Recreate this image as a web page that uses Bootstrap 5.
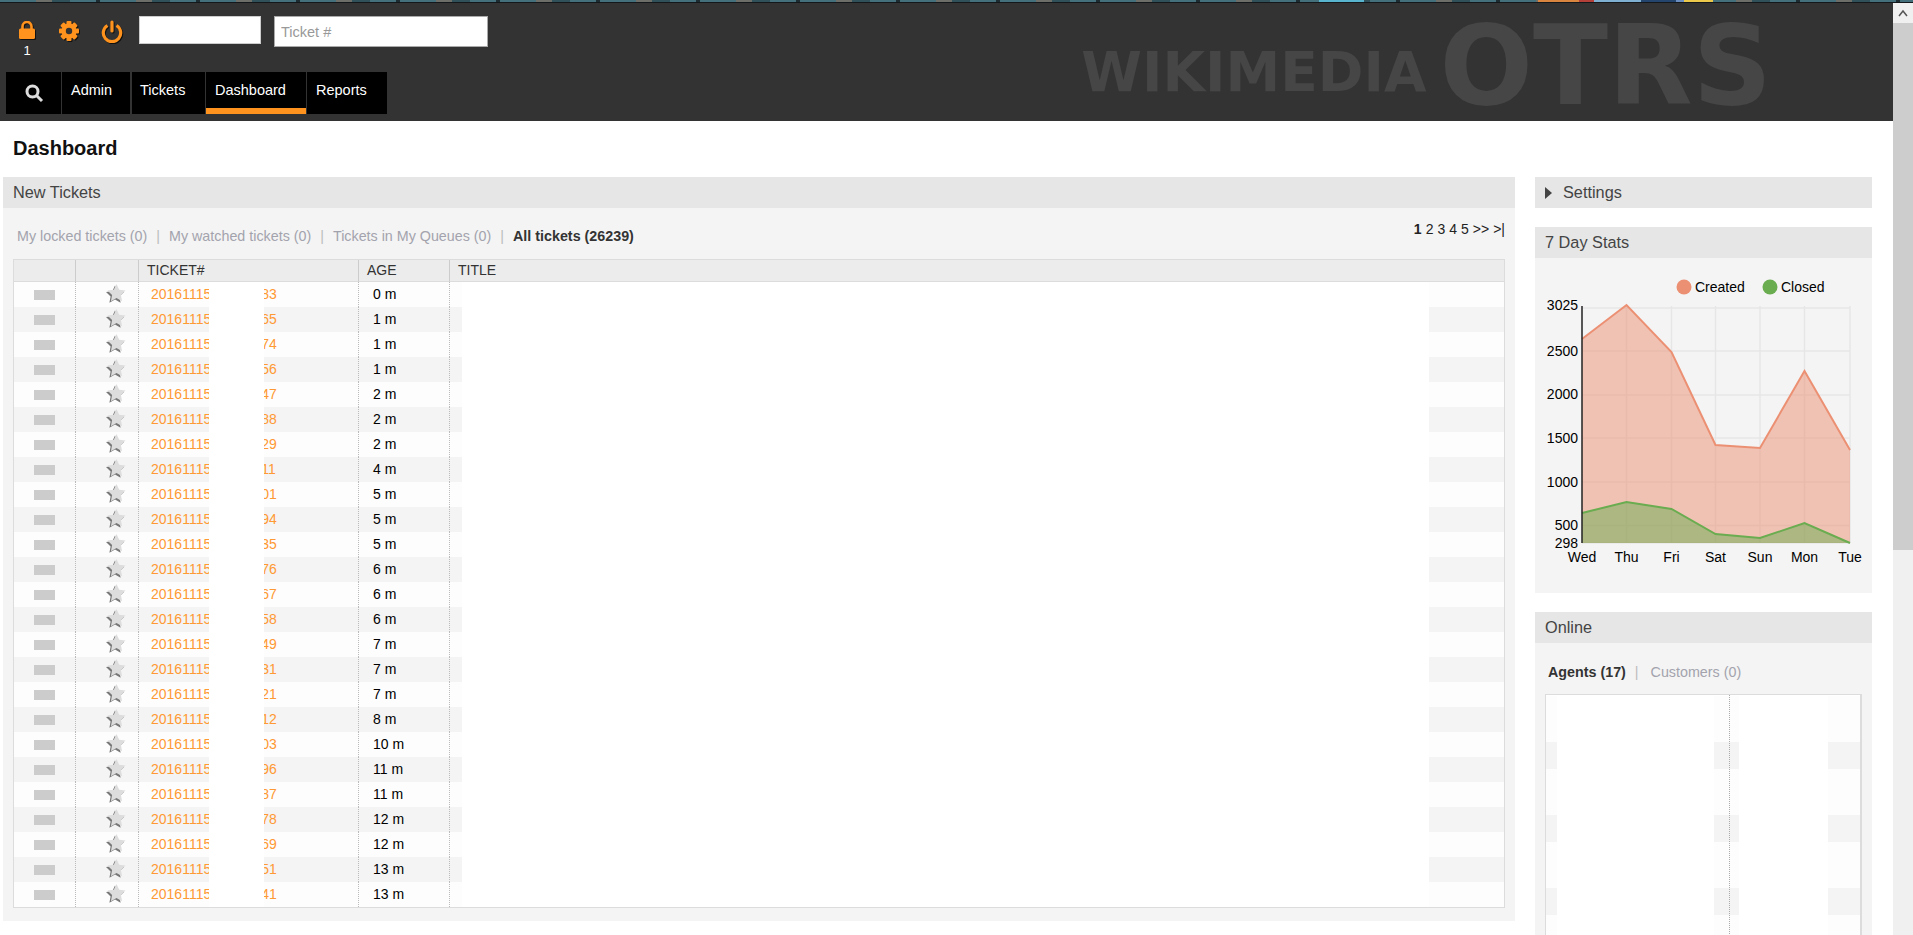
<!DOCTYPE html>
<html lang="en">
<head>
  <meta charset="UTF-8" />
  <meta name="viewport" content="width=device-width, initial-scale=1" />
  <title>Dashboard - OTRS</title>
  <link href="https://cdn.jsdelivr.net/npm/bootstrap@5.3.0/dist/css/bootstrap.min.css" rel="stylesheet" />
  <style>
    html, body { height: 100%; overflow: hidden; }
    body { font-family: "Liberation Sans", Arial, sans-serif; font-size: 14px; color: #000; background: #fff; }
    .top-strip {
      height: 3px;
      border-bottom: 1px solid #15181a;
      background:
        linear-gradient(90deg, transparent 1319px, #58b4cf 1319px 1364px, transparent 1364px 1538px, #d9853f 1538px 1579px, #b5403a 1579px 1594px, #7fb0d2 1594px 1641px, #24456e 1641px 1676px, #6b8fc0 1676px 1684px, #ecc94b 1684px 1713px, transparent 1713px),
        repeating-linear-gradient(90deg, #44707c 0 36px, #6e6e68 36px 52px, #30505a 52px 70px, #44707c 70px 96px, #1d2c31 96px 100px);
    }
    .screen { height: 932px; }
    .page { width: 1893px; overflow: hidden; }
    .fake-scroll { width: 20px; background: #f0f0f0; }
    .fake-scroll-btn { height: 20px; }
    .fake-scroll-thumb { height: 527px; background: #cdcdcd; }

    .head-bar { height: 118px; background: #333; }
    .tool-row { height: 69px; padding-top: 13px; padding-left: 17px; }
    .tool-lock { width: 20px; margin-top: 5px; }
    .tool-icon { display: block; margin: 0 auto; filter: drop-shadow(1px 1px 0 #111); }
    .tool-count { color: #fff; font-size: 13px; line-height: 14px; margin-top: 5px; }
    .tool-gear { margin-left: 21px; margin-top: 4px; filter: drop-shadow(1px 1px 0 #111); }
    .tool-power { margin-left: 21px; margin-right: 16px; margin-top: 3px; filter: drop-shadow(1px 1px 0 #111); }
    .search-box { width: 122px; height: 28px; border: 1px solid #ccc; background: #fff; }
    .ticket-box { width: 214px; height: 31px; margin-left: 13px; border: 1px solid #aaa; background: #fff; padding: 0 6px; font-size: 14.5px; color: #333; }
    .ticket-box::placeholder { color: #999; }
    .main-nav { margin-left: 6px; height: 42px; }
    .main-nav a { display: block; height: 42px; background: #000; color: #fff; text-decoration: none; line-height: 36px; font-size: 14.500px; padding: 0 9px; margin-right: 1px; }
    .main-nav a.on { box-shadow: inset 0 -6px 0 #ff931e; }
    .nav-search { width: 55px; display: flex !important; align-items: center; justify-content: center; }
    .nav-admin { width: 68px; }
    .main-nav a.nav-tickets { width: 73px; margin-left: 1px; padding-left: 8px; }
    .nav-dash { width: 100px; }
    .nav-reports { width: 80px; }
    .logo-text { color: #464646; font-family: "DejaVu Sans", sans-serif; font-weight: 700; margin-right: 121px; line-height: 1; white-space: nowrap; }
    .logo-small { font-size: 55px; margin-right: 13px; margin-top: 42px; }
    .logo-big { font-size: 110px; margin-top: 8px; }

    .page-title { font-size: 20px; font-weight: 700; height: 56px; line-height: 54px; padding-left: 13px; margin: 0; color: #111; }
    .layout { padding-left: 3px; }
    .col-left { width: 1512px; }
    .col-right { width: 337px; margin-left: 20px; }
    .box { background: #f4f4f4; }
    .box-gap { margin-bottom: 19px; }
    .box-head { height: 31px; line-height: 31px; background: #e6e6e6; color: #444; font-size: 16.300px; padding-left: 10px; }
    .settings-arrow { margin-right: 11px; vertical-align: -1px; }
    .tab-line { font-size: 14.300px; color: #aaa; }
    .tab-line a { color: #a3a3ad; text-decoration: none; }
    .tab-line b { color: #333; }
    .tab-line i { font-style: normal; margin: 0 9px; color: #bbb; }
    .ticket-tools { height: 51px; padding: 7px 10px 0 14px; }
    .pager { font-size: 14px; margin-top: -3px; margin-bottom: 12px; color: #222; }
    .pager span { margin-left: 4px; }

    .ticket-list { margin: 0 10px 13px 10px; border: 1px solid #dcdcdc; width: 1492px; table-layout: fixed; border-collapse: separate; border-spacing: 0; }
    .cw-mark { width: 61px; }
    .cw-star { width: 63px; }
    .cw-ticket { width: 220px; }
    .cw-age { width: 91px; }
    .ticket-list th { height: 21px; background: #ececec; border-bottom: 1px solid #dcdcdc; border-left: 1px solid #ccc; font-weight: 400; color: #333; font-size: 14px; padding: 0 0 0 8px; }
    .ticket-list th:first-child { border-left: 0; }
    .ticket-list td { height: 25px; padding: 0; border-left: 1px dotted #bbb; font-size: 14px; vertical-align: middle; }
    .ticket-list td:first-child { border-left: 0; }
    .ticket-list tr:nth-child(odd) td { background: #fdfdfd; }
    .ticket-list tr:nth-child(even) td { background: #f4f4f4; }
    .row-mark { width: 21px; height: 10px; background: #ccc; margin-left: 20px; }
    .row-star { display: block; margin-left: 30px; margin-top: -2px; }
    .tk-cell { padding-left: 12px; height: 25px; color: #ff9933; }
    .tk-gap { width: 55px; height: 25px; background: #fff; margin-left: -2px; position: relative; z-index: 1; }
    .tk-tail { margin-left: -3px; }
    .age-cell { padding-left: 14px; }
    .title-gap { height: 25px; margin: 0 75px 0 12px; background: #fff; }

    .stats-body { height: 335px; }
    .online-tabs { height: 51px; padding: 19px 0 0 13px; }
    .online-tabs i { margin-right: 12px; }
    .online-list { position: relative; margin: 0 10px; border: 2px solid #dcdcdc; border-width: 1px 2px 0 1px; padding-top: 1px; height: 300px; overflow: hidden; background: #fff; }
    .on-row { display: flex; height: 27px; background: #f4f4f4; }
    .on-row.tall { height: 46px; background: #fdfdfd; }
    .on-row div:nth-child(1) { width: 11px; }
    .on-row div:nth-child(2) { width: 157px; background: #fff; }
    .on-row div:nth-child(3) { width: 25px; }
    .on-row div:nth-child(4) { width: 89px; background: #fff; }
    .online-sep { position: absolute; top: 0; bottom: 0; left: 183px; border-left: 1px dotted #aaa; }
  </style>
</head>
<body>
  <div class="top-strip"></div>
  <div class="screen d-flex">
    <div class="page">
      <div class="head-bar d-flex justify-content-between">
        <div>
          <div class="tool-row d-flex align-items-start">
            <div class="tool-lock text-center">
              <svg class="tool-icon" width="16" height="18" viewBox="0 0 16 18"><path d="M3.500 8V5.500a4.500 4.500 0 0 1 9 0V8" fill="none" stroke="#ff931e" stroke-width="2.600"/><rect x="0" y="7.500" width="16" height="10.500" rx="1.500" fill="#ff931e"/></svg>
              <div class="tool-count">1</div>
            </div>
            <svg class="tool-gear" width="22" height="22" viewBox="0 0 22 22">
              <g fill="#ff931e">
                <circle cx="11" cy="11" r="7.500"/>
                <rect x="8.500" y="1" width="5" height="20" rx="1"/>
                <rect x="8.500" y="1" width="5" height="20" rx="1" transform="rotate(45 11 11)"/>
                <rect x="8.500" y="1" width="5" height="20" rx="1" transform="rotate(90 11 11)"/>
                <rect x="8.500" y="1" width="5" height="20" rx="1" transform="rotate(135 11 11)"/>
              </g>
              <circle cx="11" cy="11" r="3.200" fill="#333"/>
            </svg>
            <svg class="tool-power" width="22" height="24" viewBox="0 0 22 24"><path d="M6.500 6.500a8.700 8.700 0 1 0 9 0" fill="none" stroke="#ff931e" stroke-width="3.200"/><path d="M11 3v9" stroke="#ff931e" stroke-width="3.200" stroke-linecap="round"/></svg>
            <div class="search-box"></div>
            <input class="ticket-box" type="text" placeholder="Ticket #" />
          </div>
          <div class="main-nav d-flex">
            <a class="nav-search" href="#"><svg width="20" height="20" viewBox="0 0 20 20"><circle cx="8.500" cy="8.500" r="5.500" fill="none" stroke="#ddd" stroke-width="3"/><path d="M12.500 12.500L18 18" stroke="#ddd" stroke-width="3"/></svg></a>
            <a class="nav-admin" href="#">Admin</a>
            <a class="nav-tickets" href="#">Tickets</a>
            <a class="nav-dash on" href="#">Dashboard</a>
            <a class="nav-reports" href="#">Reports</a>
          </div>
        </div>
        <div class="logo-text d-flex align-items-start"><span class="logo-small">WIKIMEDIA</span><span class="logo-big">OTRS</span></div>
      </div>

      <h1 class="page-title">Dashboard</h1>

      <div class="layout d-flex align-items-start">
        <div class="col-left box">
          <div class="box-head">New Tickets</div>
          <div class="ticket-tools d-flex justify-content-between align-items-center">
            <div class="tab-line"><a href="#">My locked tickets (0)</a><i>|</i><a href="#">My watched tickets (0)</a><i>|</i><a href="#">Tickets in My Queues (0)</a><i>|</i><b>All tickets (26239)</b></div>
            <div class="pager"><b>1</b><span>2</span><span>3</span><span>4</span><span>5</span><span>&gt;&gt;</span><span>&gt;|</span></div>
          </div>
          <table class="ticket-list">
            <colgroup><col class="cw-mark"><col class="cw-star"><col class="cw-ticket"><col class="cw-age"><col></colgroup>
            <thead><tr><th></th><th></th><th>TICKET#</th><th>AGE</th><th>TITLE</th></tr></thead>
            <tbody id="ticketRows"></tbody>
          </table>
        </div>

        <div class="col-right">
          <div class="box-head box-gap"><svg class="settings-arrow" width="7" height="12" viewBox="0 0 7 12"><path d="M0 0l7 6-7 6z" fill="#444"/></svg>Settings</div>

          <div class="box box-gap">
            <div class="box-head">7 Day Stats</div>
            <div class="stats-body">
              <svg width="337" height="335" viewBox="1535 258 337 335" font-family="Liberation Sans, Arial, sans-serif" font-size="14" fill="#000">
                <circle cx="1684" cy="287" r="7.500" fill="#ec9073"/><text x="1695" y="291.500">Created</text>
                <circle cx="1770" cy="287" r="7.500" fill="#6aac50"/><text x="1781" y="291.500">Closed</text>
                <g stroke="#e6e6e6" stroke-width="1.500" fill="none">
                  <path d="M1582 308H1850M1582 351H1850M1582 395H1850M1582 438H1850M1582 482H1850M1582 525.500H1850M1582 543H1850"/>
                  <path d="M1626.500 306V543M1671.500 306V543M1715.500 306V543M1760 306V543M1804.500 306V543M1850 306V543"/>
                </g>
                <path d="M1582 339L1626.500 305L1671.500 352L1715.500 445L1760 448L1804.500 371L1850 450V543H1582Z" fill="#ec9073" fill-opacity=".5"/>
                <path d="M1582 339L1626.500 305L1671.500 352L1715.500 445L1760 448L1804.500 371L1850 450" fill="none" stroke="#ec9073" stroke-width="2"/>
                <path d="M1582 513L1626.500 502L1671.500 509L1715.500 534L1760 538L1804.500 523L1850 543H1582Z" fill="#6aac50" fill-opacity=".5"/>
                <path d="M1582 513L1626.500 502L1671.500 509L1715.500 534L1760 538L1804.500 523L1850 543" fill="none" stroke="#6aac50" stroke-width="2"/>
                <path d="M1582 306V543" stroke="#222" stroke-width="1.500"/>
                <g text-anchor="end">
                  <text x="1578" y="310">3025</text><text x="1578" y="356">2500</text><text x="1578" y="399">2000</text><text x="1578" y="443">1500</text><text x="1578" y="487">1000</text><text x="1578" y="530">500</text><text x="1578" y="548">298</text>
                </g>
                <g text-anchor="middle">
                  <text x="1582" y="562">Wed</text><text x="1626.500" y="562">Thu</text><text x="1671.500" y="562">Fri</text><text x="1715.500" y="562">Sat</text><text x="1760" y="562">Sun</text><text x="1804.500" y="562">Mon</text><text x="1850" y="562">Tue</text>
                </g>
              </svg>
            </div>
          </div>

          <div class="box">
            <div class="box-head">Online</div>
            <div class="online-tabs tab-line"><b>Agents (17)</b><i>|</i><a href="#">Customers (0)</a></div>
            <div class="online-list" id="onlineRows"></div>
          </div>
        </div>
      </div>
    </div>
    <div class="fake-scroll">
      <div class="fake-scroll-btn d-flex align-items-center justify-content-center"><svg width="10" height="8" viewBox="0 0 10 8"><path d="M1 7l4-5 4 5" fill="none" stroke="#555" stroke-width="1.500"/></svg></div>
      <div class="fake-scroll-thumb"></div>
    </div>
  </div>

  <script>
    const tails = ["83","65","74","56","47","88","29","11","01","94","35","76","67","58","49","31","21","12","03","96","87","78","69","51","41"];
    const ages = [0,1,1,1,2,2,2,4,5,5,5,6,6,6,7,7,7,8,10,11,11,12,12,13,13];
    const starPath = "M9 0l2.700 5.800 6.300.8-4.600 4.300 1.200 6.300L9 14.100 3.400 17.200l1.200-6.300L0 6.600l6.300-.8z";
    const star = `<svg class="row-star" width="20" height="19" viewBox="0 0 20 19"><path d="${starPath}" transform="translate(0 1.500)" fill="#777"/><path d="${starPath}" transform="translate(1.500 0)" fill="#ddd"/></svg>`;
    document.getElementById("ticketRows").innerHTML = tails.map((t, i) => `<tr>
      <td><div class="row-mark"></div></td>
      <td>${star}</td>
      <td><div class="tk-cell d-flex align-items-center"><span>20161115</span><div class="tk-gap"></div><div class="tk-tail">${t}</div></div></td>
      <td><div class="age-cell">${ages[i]} m</div></td>
      <td><div class="title-gap"></div></td>
    </tr>`).join("");

    const rowCell = "<div></div><div></div><div></div><div></div><div></div>";
    let html = '<div class="online-sep"></div>';
    for (let i = 0; i < 4; i++) {
      html += `<div class="on-row tall">${rowCell}</div>`;
      html += `<div class="on-row">${rowCell}</div>`;
    }
    document.getElementById("onlineRows").innerHTML = html;
  </script>
  <script src="https://cdn.jsdelivr.net/npm/bootstrap@5.3.0/dist/js/bootstrap.bundle.min.js"></script>
</body>
</html>
